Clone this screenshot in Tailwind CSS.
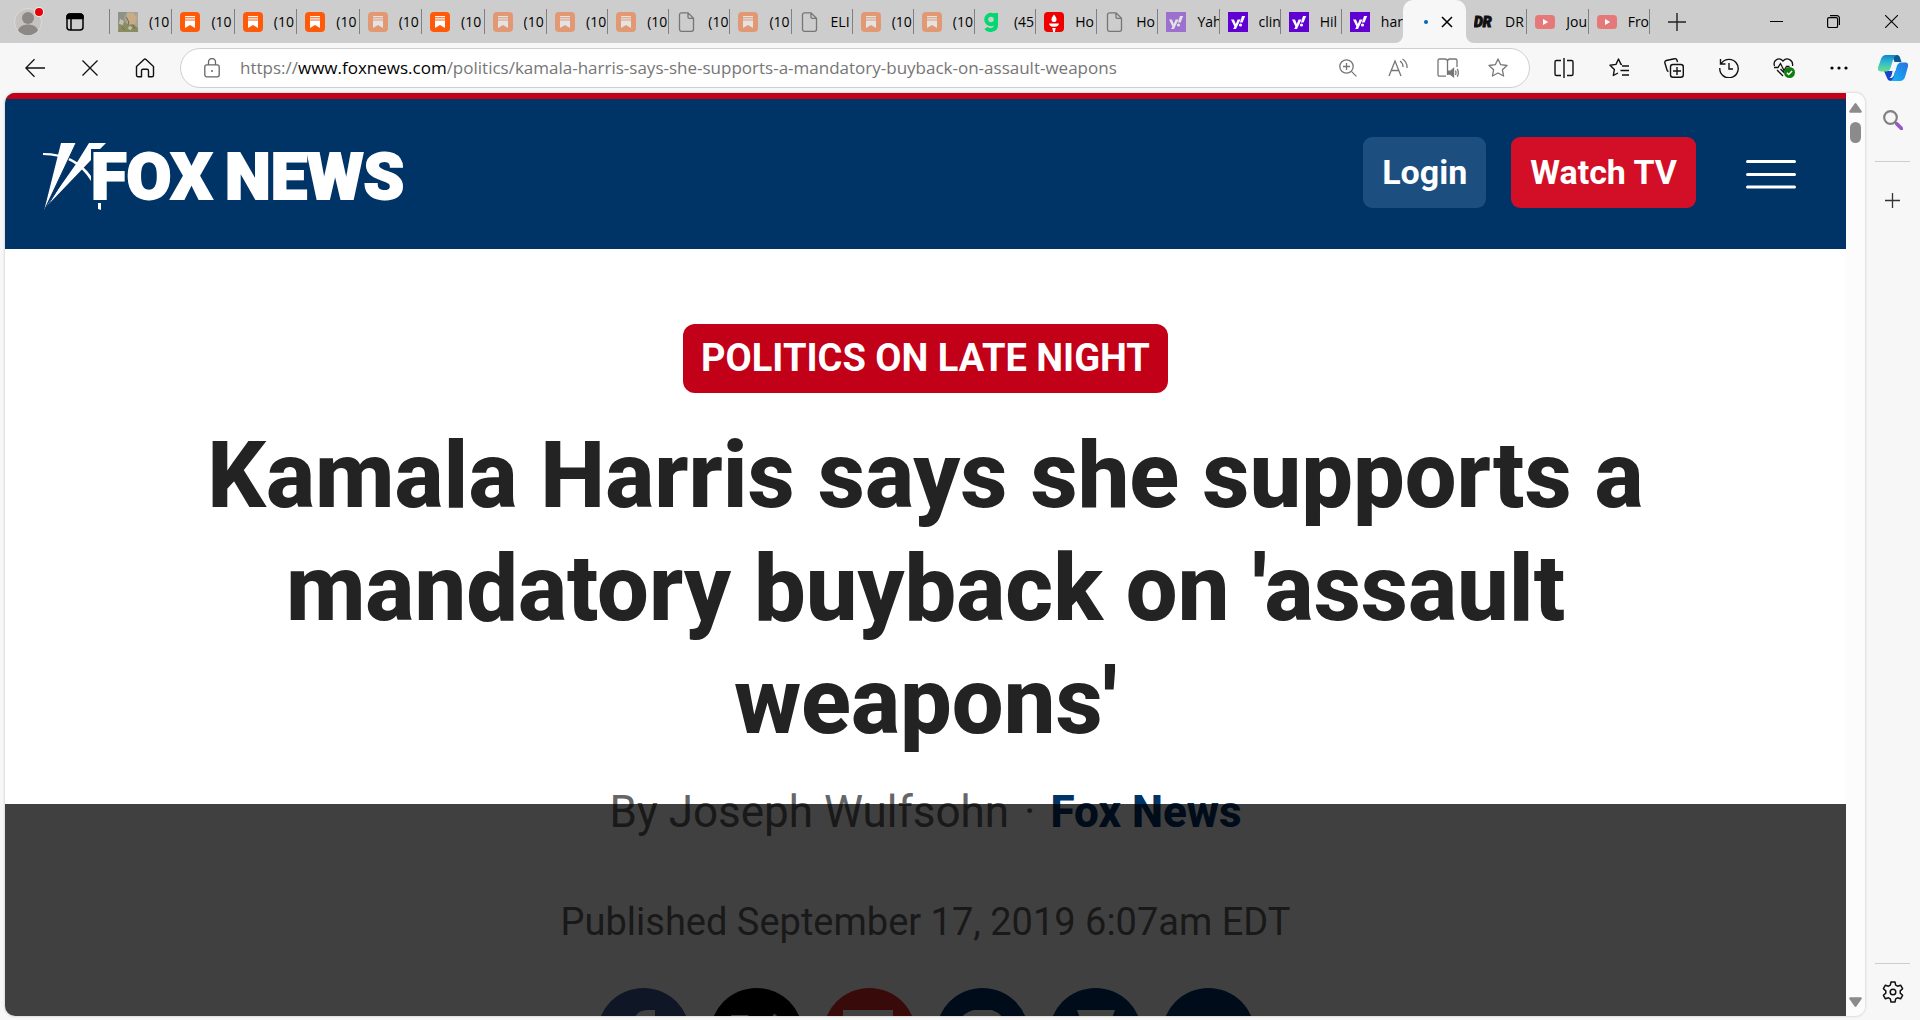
<!DOCTYPE html>
<html lang="en">
  <head>
    <meta charset="UTF-8" />
    <meta name="viewport" content="width=device-width, initial-scale=1.0" />
    <title>Kamala Harris says she supports a mandatory buyback on 'assault weapons' | Fox News</title>
    <script src="https://cdn.jsdelivr.net/npm/@tailwindcss/browser@4"></script>
  </head>
  <body class="flex h-screen flex-col overflow-hidden bg-[#f7f7f7] font-['Open_Sans',sans-serif] text-black">
    <!-- Favicons -->
    <svg class="hidden">
      <symbol id="photo" viewBox="0 0 20 20">
        <rect width="20" height="20" fill="#a9a595" />
        <path d="M0 0h9l-3 6 2 5-8 3z" fill="#8f9288" />
        <path d="M9 1l6 0 4 5-2 6-5 1-3-5z" fill="#c9ab86" />
        <path d="M1 12l5-3 4 4 5-1 5 4v4H0z" fill="#898b60" />
        <path d="M2 7l4 2-1 4-4-1zM11 14l3 1-1 3-3-1z" fill="#c6c1ad" />
        <path d="M8 5l3 5-1 3M4 15l3 3M15 13l2 4" stroke="#6b6c50" fill="none" />
      </symbol>
      <symbol id="substack" viewBox="0 0 20 20">
        <rect width="20" height="20" rx="4" fill="#ff5a0a" />
        <path d="M5 4h10v1.3H5zM5 6.3h10v1.3H5zM5 8.6h10V16l-5-3-5 3z" fill="#fff" />
      </symbol>
      <symbol id="page" viewBox="0 0 20 20">
        <path d="M4.500 .8h6.500l5.500 5.500v11a2 2 0 0 1-2 2h-10a2 2 0 0 1-2-2V2.800a2 2 0 0 1 2-2zM11 .8v4.500a1 1 0 0 0 1 1h4.500" fill="none" stroke="#767676" stroke-width="1.300" />
      </symbol>
      <symbol id="goodr" viewBox="0 0 20 20">
        <path d="M13 1v12c0 6-8 6-10 3" fill="none" stroke="#02d86f" stroke-width="4" />
        <circle cx="8" cy="7.500" r="4.800" fill="none" stroke="#02d86f" stroke-width="4" />
      </symbol>
      <symbol id="torch" viewBox="0 0 20 20">
        <rect width="20" height="20" rx="4" fill="#ee0000" />
        <path d="M10 2.500c2 2.500 2.500 3.500 2.500 5a2.500 2.500 0 0 1-5 0c0-1.500 .5-2.500 2.500-5zM5 11.500h10c0 2-2 3.200-4 3.300H9C7 14.700 5 13.500 5 11.500zM8.300 16h3.400l-.8 4H9.100z" fill="#fff" />
      </symbol>
      <symbol id="yahoo" viewBox="0 0 20 20">
        <rect width="20" height="20" fill="#6001d2" />
        <path d="M3 7.500h3L7.800 12l1.800-4.500h2.900L8 17H5.200l1.200-2.500zM14 4h3.200l-2.600 6.500h-2.700z" fill="#fff" />
        <circle cx="12.500" cy="13" r="1.600" fill="#fff" />
      </symbol>
      <symbol id="drudge" viewBox="0 0 20 20">
        <text x="0" y="15" font-family="Roboto" font-size="14" font-weight="900" font-style="italic" fill="#111" stroke="#111">DR</text>
      </symbol>
      <symbol id="youtube" viewBox="0 0 20 20">
        <rect y="3" width="20" height="14" rx="3.500" fill="#e5797a" />
        <path d="M8 7l5.200 3L8 13z" fill="#fff" />
      </symbol>
    </svg>

    <!-- Tab strip -->
    <header class="flex h-[43px] shrink-0 items-stretch bg-[#cdcdcd] text-sm">
      <div class="flex w-[109px] shrink-0 items-center">
        <button aria-label="Profile" class="ml-[14px]">
          <svg class="size-7 overflow-visible" viewBox="0 0 28 28">
            <circle cx="14" cy="14" r="13.500" fill="#c5c3c0" stroke="#dedbd7" />
            <circle cx="14" cy="10" r="6" fill="#8b8885" />
            <path d="M4 22.500c2-8 18-8 20 0a13 13 0 0 1-20 0z" fill="#8b8885" />
            <circle cx="25" cy="4" r="5" fill="#f0f0f0" />
            <circle cx="25" cy="4" r="4" fill="#e60009" />
          </svg>
        </button>
        <button aria-label="Tab actions" class="ml-6">
          <svg class="size-[18px]" viewBox="0 0 18 18" fill="none" stroke="#000" stroke-width="1.500">
            <rect x="1" y="1" width="16" height="16" rx="3" />
            <path d="M1 4a3 3 0 0 1 3-3h10a3 3 0 0 1 3 3v1.500H1z" fill="#000" />
            <path d="M5 5v12" />
          </svg>
        </button>
      </div>
      <div class="h-[25px] w-px shrink-0 self-center bg-[#808080]"></div>
      <div id="tabs-left" class="flex w-[437px] shrink-0"></div>
      <div id="tabs-middle" class="flex w-[856px] shrink-0"></div>
      <div class="relative flex w-[63px] shrink-0 items-center rounded-t-[10px] bg-[#f7f7f7]">
        <svg class="absolute bottom-0 -left-2 size-2" viewBox="0 0 8 8"><path d="M8 0v8H0a8 8 0 0 0 8-8z" fill="#f7f7f7" /></svg>
        <svg class="absolute -right-2 bottom-0 size-2" viewBox="0 0 8 8"><path d="M0 0v8h8a8 8 0 0 1-8-8z" fill="#f7f7f7" /></svg>
        <span class="ml-[21px] size-1 rounded-full bg-[#0067b8]"></span>
        <button aria-label="Close tab" class="ml-[13px]">
          <svg class="size-3" viewBox="0 0 12 12" stroke="#000" stroke-width="1.500"><path d="M1 1l10 10M11 1L1 11" /></svg>
        </button>
      </div>
      <div id="tabs-right" class="flex w-[184px] shrink-0"></div>
      <button aria-label="New tab" class="flex w-[54px] items-center justify-center">
        <svg class="size-[18px]" viewBox="0 0 18 18" stroke="#222" stroke-width="1.400"><path d="M9 0v18M0 9h18" /></svg>
      </button>
      <div class="ml-auto flex shrink-0">
        <button aria-label="Minimize" class="flex w-[57px] items-center justify-center">
          <svg class="size-[13px]" viewBox="0 0 13 13" stroke="#000"><path d="M0 6.500h13" /></svg>
        </button>
        <button aria-label="Restore" class="flex w-[57px] items-center justify-center">
          <svg class="size-[13px]" viewBox="0 0 13 13" fill="none" stroke="#000" stroke-width="1.200">
            <rect x=".6" y="2.600" width="10" height="10" rx="1.500" />
            <path d="M3 .7h7a2.400 2.400 0 0 1 2.400 2.400V10" />
          </svg>
        </button>
        <button aria-label="Close" class="flex w-[58px] items-center justify-center">
          <svg class="size-[13px]" viewBox="0 0 13 13" stroke="#000" stroke-width="1.100"><path d="M0 0l13 13M13 0L0 13" /></svg>
        </button>
      </div>
    </header>

    <!-- Toolbar -->
    <div class="flex h-[50px] shrink-0 items-center pl-[7px]">
      <button aria-label="Back" class="flex w-[55px] justify-center">
        <svg class="size-5" viewBox="0 0 20 20" fill="none" stroke="#111" stroke-width="1.300"><path d="M20 10H.8M9.500 1.200L.8 10l8.700 8.800" /></svg>
      </button>
      <button aria-label="Stop" class="flex w-[55px] justify-center">
        <svg class="size-4" viewBox="0 0 16 16" stroke="#111" stroke-width="1.300"><path d="M.5 .5l15 15M15.500 .5l-15 15" /></svg>
      </button>
      <button aria-label="Home" class="flex w-[55px] justify-center">
        <svg class="size-5" viewBox="0 0 20 20" fill="none" stroke="#111" stroke-width="1.400" stroke-linejoin="round">
          <path d="M1.500 8.500L9 1.500q1-.9 2 0l7.500 7v8.800a1.500 1.500 0 0 1-1.500 1.500h-3.500v-6a1.500 1.500 0 0 0-1.500-1.500H8a1.500 1.500 0 0 0-1.500 1.500v6H3a1.500 1.500 0 0 1-1.500-1.500z" />
        </svg>
      </button>
      <div class="ml-2 flex h-10 flex-1 items-center rounded-full border border-[#cfcfcf] bg-white pr-[6px] pl-[23px] text-[#767676]">
        <svg class="h-5 w-4 shrink-0" viewBox="0 0 16 20" fill="none" stroke="#666" stroke-width="1.300">
          <rect x=".8" y="6.800" width="14.400" height="12" rx="2" />
          <path d="M4.500 6.800V4a3.500 3.500 0 0 1 7 0v2.800" />
          <circle cx="8" cy="13" r="1" fill="#666" stroke="none" />
        </svg>
        <a href="https://www.foxnews.com/politics/kamala-harris-says-she-supports-a-mandatory-buyback-on-assault-weapons" class="ml-5 flex-1 truncate text-[17px]">https://<span class="text-black">www.foxnews.com</span>/politics/kamala-harris-says-she-supports-a-mandatory-buyback-on-assault-weapons</a>
        <button aria-label="Zoom" class="flex w-[50px] justify-center">
          <svg class="size-[18px]" viewBox="0 0 18 18" fill="none" stroke="#767676" stroke-width="1.300">
            <circle cx="7.500" cy="7.500" r="6.700" /><path d="M12.400 12.400l5 5M7.500 4v7M4 7.500h7" />
          </svg>
        </button>
        <button aria-label="Read aloud" class="flex w-[50px] justify-center">
          <svg class="size-5" viewBox="0 0 20 20" fill="none" stroke="#767676" stroke-width="1.300">
            <path d="M1 18L7 3l6 15M3.200 12.500h7.600M12 3a7 7 0 0 1 3 6M14.500 1a10 10 0 0 1 4.500 9" />
          </svg>
        </button>
        <button aria-label="Immersive reader" class="flex w-[50px] justify-center">
          <svg class="h-5 w-[22px]" viewBox="0 0 22 20" fill="none" stroke="#767676" stroke-width="1.300">
            <path d="M9 18.200H2.500a1.500 1.500 0 0 1-1.500-1.500V2.500A1.500 1.500 0 0 1 2.500 1H8a2.500 2.500 0 0 1 2.500 2.500V17M10.500 3.500A2.500 2.500 0 0 1 13 1h5.500A1.500 1.500 0 0 1 20 2.500V9" />
            <path d="M11.500 13.200h2l3-2.500v8l-3-2.500h-2z" fill="#767676" />
            <path d="M18.500 12.500q1 2 0 4.500M20.300 10.800q2 4 0 8" />
          </svg>
        </button>
        <button aria-label="Favorite" class="flex w-[50px] justify-center">
          <svg class="size-5" viewBox="0 0 20 20" fill="none" stroke="#767676" stroke-width="1.300" stroke-linejoin="round">
            <path d="M10 1l2.700 5.700 6.300.8-4.600 4.300 1.200 6.200L10 15l-5.600 3 1.200-6.200L1 7.500l6.300-.8z" />
          </svg>
        </button>
      </div>
      <button aria-label="Split screen" class="ml-[6px] flex w-[55px] justify-center">
        <svg class="size-5" viewBox="0 0 20 20" fill="none" stroke="#111" stroke-width="1.400">
          <path d="M7 2.500H2.500A1.500 1.500 0 0 0 1 4v12a1.500 1.500 0 0 0 1.500 1.500H7M13 2.500h4.500A1.500 1.500 0 0 1 19 4v12a1.500 1.500 0 0 1-1.500 1.500H13M10 0v20" />
        </svg>
      </button>
      <button aria-label="Favorites" class="flex w-[55px] justify-center">
        <svg class="size-5" viewBox="0 0 20 20" fill="none" stroke="#111" stroke-width="1.400" stroke-linejoin="round">
          <path d="M13 6.500l-1-.1L9.500 1 7 6.400 1 7.200l4.400 4.200L4.300 17.500l4.700-2.500M13 8h7M11.500 12.500H20M13 17h7" />
        </svg>
      </button>
      <button aria-label="Collections" class="flex w-[55px] justify-center">
        <svg class="size-5" viewBox="0 0 20 20" fill="none" stroke="#111" stroke-width="1.400">
          <rect x="6.500" y="6.500" width="12.800" height="12.800" rx="2.500" />
          <path d="M13 9v8M9 13h8M4.500 13.500a2 2 0 0 1-1.500-1.500L.9 5a2 2 0 0 1 1.400-2.500L10.500 .8A2 2 0 0 1 13 2.200l.5 2" />
        </svg>
      </button>
      <button aria-label="History" class="flex w-[55px] justify-center">
        <svg class="size-5" viewBox="0 0 20 20" fill="none" stroke="#111" stroke-width="1.400">
          <path d="M1.500 1v5h5M2 6a9.200 9.200 0 1 1-1.200 4M10 5v6h4" />
        </svg>
      </button>
      <button aria-label="Browser essentials" class="flex w-[55px] justify-center">
        <svg class="h-5 w-[22px]" viewBox="0 0 22 20" fill="none" stroke="#111" stroke-width="1.300">
          <path d="M1.500 8C-.5 2 6-1.500 10 3c4-4.500 10.500-1 9.500 5M1 9.500h4l2.500-4 3.500 7 2.500-4h3M4 12l6 6M7.500 11l4 4" />
          <circle cx="16.500" cy="14.500" r="5.500" fill="#107c10" stroke="none" />
          <path d="M13.900 14.700l1.800 1.800 3.400-3.500" stroke="#fff" stroke-width="1.400" />
        </svg>
      </button>
      <button aria-label="Settings and more" class="flex w-[55px] justify-center">
        <svg class="h-1 w-4 overflow-visible" viewBox="0 0 16 4"><circle cx="1" cy="2" r="1.600" /><circle cx="8" cy="2" r="1.600" /><circle cx="15" cy="2" r="1.600" /></svg>
      </button>
      <button aria-label="Copilot" class="flex w-[54px] justify-center">
        <svg class="h-7 w-[30px]" viewBox="0 0 30 28">
          <defs>
            <linearGradient id="c1" x1="0" y1="1" x2="0" y2="0"><stop stop-color="#6ce08c" /><stop offset=".6" stop-color="#2cb6d0" /><stop offset="1" stop-color="#0f86cc" /></linearGradient>
            <linearGradient id="c2" x1="1" y1="0" x2="0" y2="1"><stop stop-color="#2a70de" /><stop offset="1" stop-color="#0fb8fa" /></linearGradient>
          </defs>
          <path d="M14 1h5q2.500 0 3.500 4l1 3h-7z" fill="#0b5a94" />
          <path d="M6 17l3 7q1 3 4 3h3l2-10z" fill="#1745c9" />
          <path d="M8 1h11q-3 1-4 5l-2.500 8q-1 3.500-4.500 3.500H3q-4 0-3-4L3 5q1.500-4 5-4z" fill="url(#c1)" />
          <path d="M22 27H12q3-1 4-5l2.500-9Q19.500 8.500 23 8.500h4q4 0 3 4l-3 10.500q-1.500 4-5 4z" fill="url(#c2)" />
          <path d="M16.500 8.500h5q-2.500 1-3.300 4.500L16 21q-.8 2.500-2.500 3h-2q1.700-.8 2.200-3z" fill="#f7f7f7" />
        </svg>
      </button>
    </div>

    <div class="flex min-h-0 flex-1 pb-1 pl-[5px]">
      <!-- Web page -->
      <div class="flex min-w-0 flex-1 overflow-hidden rounded-[10px] bg-white shadow-[0_0_2px_1px_#dcdcdc]">
        <main class="relative min-w-0 flex-1 overflow-hidden font-['Roboto',sans-serif]">
          <nav class="flex h-[156px] items-center border-t-[6px] border-[#c20017] bg-[#003366] pr-[50px] pl-[38px] text-white">
            <a href="#" aria-label="Fox News" class="pt-2">
              <svg class="block h-[70px] w-[364px]" viewBox="0 0 364 70" fill="#fff">
                <path d="M18 0h15L1 68z" />
                <path d="M46 0h17l-6 6H48v11L2 65 33 21z" />
                <path d="M0 10v2q32 0 48 26v-5Q32 10 0 10z" />
                <path d="M33 0L1 68M27 26L2 67" stroke="#003366" />
                <path d="M55 60h3v7l-3-1z" />
                <g font-family="Roboto" font-size="65" font-weight="900" stroke="#fff" stroke-width="2">
                  <text x="48" y="56">FOX</text>
                  <text x="182" y="56">NEWS</text>
                </g>
              </svg>
            </a>
            <div class="ml-auto flex items-center text-[34px] font-bold">
              <div class="flex gap-[25px] pb-1">
                <button class="h-[71px] rounded-[9px] bg-[#1c4e80] px-[19px]">Login</button>
                <button class="h-[71px] rounded-[9px] bg-[#d20f26] px-[19px]">Watch TV</button>
              </div>
              <button aria-label="Menu" class="ml-[50px]">
                <svg class="h-[29px] w-[50px]" viewBox="0 0 50 29" stroke="#fff" stroke-width="3" stroke-linecap="round"><path d="M1.500 1.500h47M1.500 14.500h47M1.500 27h47" /></svg>
              </button>
            </div>
          </nav>

          <article class="flex flex-col items-center px-[180px] pt-[75px] text-center">
            <a href="#" class="flex h-[69px] items-center rounded-xl bg-[#c20017] px-[18px] text-[38px] font-bold text-white">POLITICS ON LATE NIGHT</a>
            <h1 class="mt-[26px] text-[92px] leading-[113px] font-extrabold text-[#232323]">Kamala Harris says she supports a mandatory buyback on 'assault weapons'</h1>
            <p class="mt-[26px] text-[44px] leading-[56px] text-[#666]">By Joseph Wulfsohn <span class="mx-1">·</span> <a href="#" class="font-extrabold text-[#003366]">Fox News</a></p>
            <p class="mt-[58px] text-[38px] leading-[48px] text-[#666]">Published September 17, 2019 6:07am EDT</p>
            <div class="mt-[42px] flex gap-5">
              <a href="#" aria-label="Facebook"><svg class="size-[93px]" viewBox="0 0 93 93"><circle cx="46.500" cy="46.500" r="46.500" fill="#3f5896" /><path d="M58 22v12h-5q-4 0-4 4v6h9l-2 11h-7v26H37V55h-7V44h7v-8q0-14 14-14z" fill="#fff" /></svg></a>
              <a href="#" aria-label="X"><svg class="size-[93px]" viewBox="0 0 93 93"><circle cx="46.500" cy="46.500" r="46.500" /><path d="M25 29h12l31 38H56z" fill="none" stroke="#fff" stroke-width="4" /><path d="M66 27L27 68" stroke="#fff" stroke-width="4" /></svg></a>
              <a href="#" aria-label="Flipboard"><svg class="size-[93px]" viewBox="0 0 93 93"><circle cx="46.500" cy="46.500" r="46.500" fill="#e12828" /><path d="M20 22h50v16H55v16H39v17H20z" fill="#fff" /></svg></a>
              <a href="#" aria-label="Comments"><svg class="size-[93px]" viewBox="0 0 93 93"><circle cx="46.500" cy="46.500" r="46.500" fill="#003366" /><path d="M38 22h18q14 5 14 20T52 62L38 72V62Q22 58 22 42t16-20z" fill="#fff" /></svg></a>
              <a href="#" aria-label="Print"><svg class="size-[93px]" viewBox="0 0 93 93"><circle cx="46.500" cy="46.500" r="46.500" fill="#003366" /><path d="M28 22h38l-3 8H31zM22 36h50v25H62V50H32v11H22zM36 54h22v17H36z" fill="#fff" /></svg></a>
              <a href="#" aria-label="Email"><svg class="size-[93px]" viewBox="0 0 93 93"><circle cx="46.500" cy="46.500" r="46.500" fill="#003366" /><path d="M22 32l25 18 25-18v32H22z" fill="#fff" /></svg></a>
            </div>
          </article>
          <div class="absolute inset-x-0 bottom-0 h-[212px] bg-black/75"></div>
        </main>

        <!-- Scrollbar -->
        <div class="flex w-[19px] shrink-0 flex-col items-center bg-[#fcfcfc] pt-[10px] pb-[9px]">
          <svg class="h-[10px] w-[13px]" viewBox="0 0 13 10" fill="#8b8b8b"><path d="M5.500 .7q1-1.200 2 0L12.600 8q.7 1.700-1 1.700H1.400Q-.3 9.700.4 8z" /></svg>
          <div class="mt-[9px] h-[21px] w-[11px] rounded-full bg-[#8b8b8b]"></div>
          <svg class="mt-auto h-[10px] w-[13px] rotate-180" viewBox="0 0 13 10" fill="#8b8b8b"><path d="M5.500 .7q1-1.200 2 0L12.600 8q.7 1.700-1 1.700H1.400Q-.3 9.700.4 8z" /></svg>
        </div>
      </div>

      <!-- Edge sidebar -->
      <aside class="flex w-[55px] shrink-0 flex-col items-center pt-[17px] pb-[13px]">
        <button aria-label="Search">
          <svg class="size-5" viewBox="0 0 20 20" fill="none">
            <circle cx="7.500" cy="7.500" r="6.300" stroke="#808080" stroke-width="2.200" />
            <path d="M14 14l4.500 4.500" stroke="#9558cc" stroke-width="3.800" stroke-linecap="round" /><path d="M12 12l1.500 1.500" stroke="#777" stroke-width="2" />
          </svg>
        </button>
        <hr class="mt-[31px] w-[35px] border-[#cdcdcd]" />
        <button aria-label="Customize" class="mt-[31px]">
          <svg class="size-[15px]" viewBox="0 0 15 15" stroke="#333" stroke-width="1.300"><path d="M7.500 0v15M0 7.500h15" /></svg>
        </button>
        <hr class="mt-auto w-[35px] border-[#cdcdcd]" />
        <button aria-label="Settings" class="mt-[17px]">
          <svg class="size-[22px]" viewBox="0 0 22 22" fill="none" stroke="#111" stroke-width="1.500" stroke-linejoin="round">
            <path d="M9 1h4l.7 3.200 1.800 1 3.100-1 2 3.500-2.400 2.200v2.200l2.400 2.200-2 3.500-3.100-1-1.800 1L13 21H9l-.7-3.200-1.800-1-3.100 1-2-3.500 2.400-2.200V9.900L1.400 7.700l2-3.500 3.100 1 1.800-1z" />
            <circle cx="11" cy="11" r="2.800" />
          </svg>
        </button>
      </aside>
    </div>

    <script>
      // icon, title, sleeping
      const tabs = {
        "tabs-left": [
          ["photo", "(10"],
          ["substack", "(10"],
          ["substack", "(10"],
          ["substack", "(10"],
          ["substack", "(10", true],
          ["substack", "(10"],
          ["substack", "(10", true],
        ],
        "tabs-middle": [
          ["substack", "(10", true],
          ["substack", "(10", true],
          ["page", "(10"],
          ["substack", "(10", true],
          ["page", "ELI"],
          ["substack", "(10", true],
          ["substack", "(10", true],
          ["goodr", "(45"],
          ["torch", "Ho"],
          ["page", "Ho"],
          ["yahoo", "Yah", true],
          ["yahoo", "clin"],
          ["yahoo", "Hil"],
          ["yahoo", "har"],
        ],
        "tabs-right": [
          ["drudge", "DR"],
          ["youtube", "Jou"],
          ["youtube", "Fro"],
        ],
      };

      for (const [id, items] of Object.entries(tabs)) {
        document.getElementById(id).innerHTML = items
          .map(
            ([icon, title, sleeping], i) => `
            <a href="#" class="flex min-w-0 flex-1 items-center pl-2 text-black">
              <svg class="size-5 shrink-0 ${sleeping ? "opacity-45" : ""}"><use href="#${icon}" /></svg>
              <span class="ml-[11px] flex-1 overflow-hidden whitespace-nowrap">${title}</span>
              ${id === "tabs-middle" && i === items.length - 1 ? "" : '<span class="h-[25px] w-px bg-[#808080]"></span>'}
            </a>`
          )
          .join("");
      }
    </script>
  </body>
</html>
